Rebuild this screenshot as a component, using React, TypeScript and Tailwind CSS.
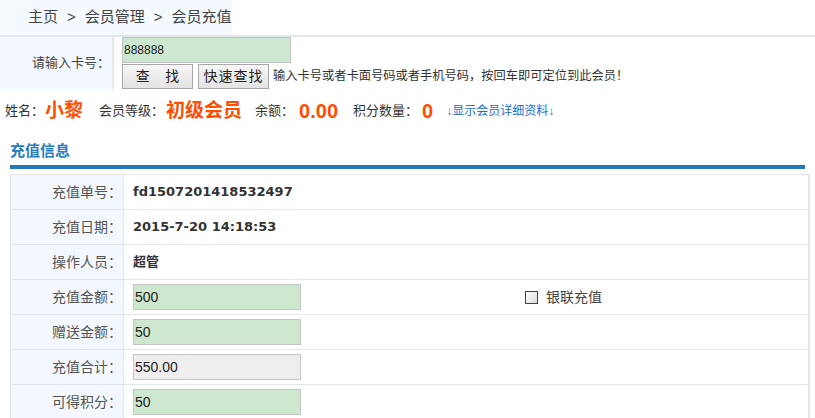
import React from 'react';

const rows: { label: string; kind: 'text' | 'input' | 'readonly'; value: string; extra?: boolean }[] = [
    { label: '充值单号：', kind: 'text', value: 'fd1507201418532497' },
    { label: '充值日期：', kind: 'text', value: '2015-7-20 14:18:53' },
    { label: '操作人员：', kind: 'text', value: '超管' },
    { label: '充值金额：', kind: 'input', value: '500', extra: true },
    { label: '赠送金额：', kind: 'input', value: '50' },
    { label: '充值合计：', kind: 'readonly', value: '550.00' },
    { label: '可得积分：', kind: 'input', value: '50' },
];

const Button = ({ children, className = '' }: { children: React.ReactNode; className?: string }) => (
    <button
        type="button"
        className={`h-[25px] w-[71px] border border-[#a7a7a7] bg-gradient-to-b from-[#f7f7f7] to-[#e3e3e3] text-[14px] text-[#222] ${className}`}
    >
        {children}
    </button>
);

export default function App() {
    return (
        <div className="h-[418px] w-[815px] overflow-hidden bg-white font-['Liberation_Sans','Noto_Sans_CJK_SC',sans-serif] text-[#333]">
            {/* breadcrumb */}
            <div className="border-b-2 border-[#e3e6ea]">
                <div className="flex h-[35px] w-fit items-center bg-[#f4faff] pl-[28px] text-[15px] text-[#444]">
                    <span>主页</span>
                    <span className="mx-[9px]">&gt;</span>
                    <span>会员管理</span>
                    <span className="mx-[9px]">&gt;</span>
                    <span>会员充值</span>
                </div>
            </div>

            {/* search */}
            <div className="flex h-[52px]">
                <div className="flex w-[114px] items-center justify-end border-r-2 border-[#e6e9ec] bg-[#f2f8fe] pr-[2px] text-[13px] text-[#444]">
                    请输入卡号：
                </div>
                <div className="pl-[8px]">
                    <input
                        readOnly
                        value="888888"
                        className="block h-[26px] w-[169px] border border-[#c2c2c2] bg-[#cde8d0] pl-[1px] text-[12px] text-[#222] outline-none"
                    />
                    <div className="mt-[1px] flex items-center">
                        <Button>查&nbsp;&nbsp;&nbsp;&nbsp;找</Button>
                        <Button className="ml-[5px] tracking-[1px]">快速查找</Button>
                        <span className="ml-[4px] text-[12.25px] text-[#333]">
                            输入卡号或者卡面号码或者手机号码，按回车即可定位到此会员！
                        </span>
                    </div>
                </div>
            </div>

            {/* member summary */}
            <div className="mt-[7px] flex h-[30px] items-center pl-[5px] text-[13px] text-[#333]">
                <span>姓名：</span>
                <span className="ml-[1px] mr-[16px] text-[19px] font-bold text-[#ff4d00]">小黎</span>
                <span>会员等级：</span>
                <span className="ml-[2px] mr-[13px] text-[19px] font-bold text-[#ff4d00]">初级会员</span>
                <span>余额：</span>
                <span className="ml-[5px] mr-[15px] text-[20px] font-bold text-[#ff4d00]">0.00</span>
                <span>积分数量：</span>
                <span className="ml-[4px] mr-[13px] text-[20px] font-bold text-[#ff4d00]">0</span>
                <a className="text-[12px] text-[#1a6fd0]">↓显示会员详细资料↓</a>
            </div>

            {/* section title */}
            <div className="mx-[10px] mt-[12px]">
                <div className="flex h-[27px] items-center text-[15px] font-bold text-[#2a7cc0]">充值信息</div>
                <div className="h-[4px] bg-[#2279b5]" />
            </div>

            {/* recharge table */}
            <div className="ml-[10px] mt-[5px] w-[800px] border-l border-r-2 border-t border-[#e4e7ea]">
                {rows.map((row) => (
                    <div key={row.label} className="flex h-[35px] border-b border-[#e4e7ea]">
                        <div className="flex w-[113px] items-center justify-end border-r border-[#e4e7ea] bg-[#f2f8fe] pr-[1px] text-[14px] text-[#555]">
                            {row.label}
                        </div>
                        <div className="flex flex-1 items-center pl-[9px]">
                            {row.kind === 'text' ? (
                                <span className="font-['DejaVu_Sans','Noto_Sans_CJK_SC',sans-serif] text-[13px] font-bold text-[#333]">
                                    {row.value}
                                </span>
                            ) : (
                                <div className="w-[392px]">
                                    <input
                                        readOnly
                                        value={row.value}
                                        className={`block h-[26px] w-[168px] border border-[#c6c6c6] pl-[1px] text-[14px] text-[#222] outline-none ${
                                            row.kind === 'readonly' ? 'bg-[#eeeeee]' : 'bg-[#cde8cf]'
                                        }`}
                                    />
                                </div>
                            )}
                            {row.extra && (
                                <label className="flex items-center text-[14px] text-[#444]">
                                    <span className="h-[13px] w-[13px] border border-[#1e4a78] bg-gradient-to-br from-[#ffffff] to-[#dcdcdc]" />
                                    <span className="ml-[8px]">银联充值</span>
                                </label>
                            )}
                        </div>
                    </div>
                ))}
            </div>
        </div>
    );
}
